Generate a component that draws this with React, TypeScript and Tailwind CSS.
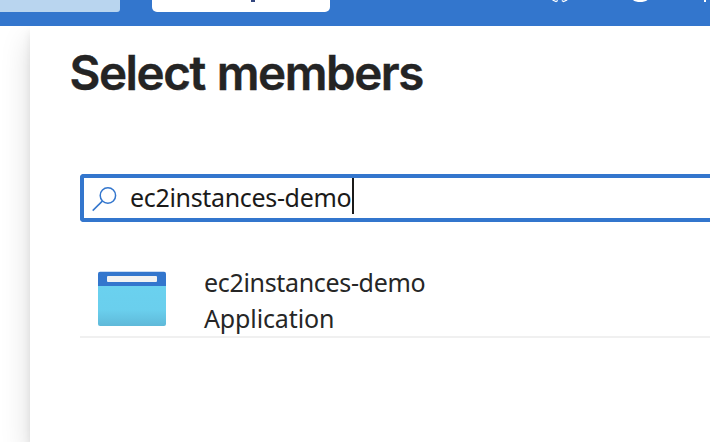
function AppIcon() {
  return (
    <svg className="block h-[56px] w-[68px] shrink-0" viewBox="0 0 68 56" aria-hidden="true">
      <defs>
        <linearGradient id="appBody" x1="0" y1="0" x2="0" y2="1">
          <stop offset="0" stopColor="#6ad1ef" />
          <stop offset="0.6" stopColor="#6acfed" />
          <stop offset="1" stopColor="#5fb9d9" />
        </linearGradient>
      </defs>
      <path d="M0 15H68V53Q68 55 66 55H2Q0 55 0 53Z" fill="url(#appBody)" />
      <path d="M2 .7H66Q68 .7 68 2.700V15H0V2.700Q0 .7 2 .7Z" fill="#3376cd" />
      <rect x="9" y="5" width="50" height="6" rx="1" fill="#f2f2f2" />
    </svg>
  );
}

function TopBar() {
  return (
    <header className="flex h-[26px] shrink-0 items-start bg-[#3376cd]">
      <div className="h-3 w-[120px] rounded-br-[3px] bg-[#b9d5ef]" />
      <div className="ml-8 h-3 w-[178px] rounded-b-[5px] bg-white">
        <div className="ml-[99px] h-[2px] w-[4px] bg-[#34477f]" />
      </div>
      <svg className="ml-auto h-3 w-[170px]" viewBox="0 0 170 12" fill="none" aria-hidden="true">
        <path d="M12.5 0L16 1.500L17.800 .5M27.200 0L23.500 1.500L21.800 .5" stroke="#fff" strokeWidth="1.2" />
        <path d="M93 0C96 2.800 104 2.800 107.500 0Z" fill="#fff" />
        <path d="M164 0H166V2H164Z" fill="#fff" />
      </svg>
    </header>
  );
}

export default function App() {
  return (
    <div className="flex h-[442px] w-[710px] flex-col overflow-hidden bg-white font-['Noto_Sans',sans-serif] text-[#262626]">
      <TopBar />
      <div className="flex flex-1 overflow-hidden">
        <div className="w-[30px] shrink-0 bg-white" />
        <main className="flex-1 bg-white pl-[40px] shadow-[0_14px_28px_rgba(0,0,0,0.15),0_6px_8px_rgba(0,0,0,0.07)]">
          <h1 className="-ml-[0.5px] h-[148px] pt-[18px] font-['Inter',sans-serif] text-[47.5px] leading-[58px] font-semibold tracking-[-1.45px] [word-spacing:1.5px] whitespace-nowrap text-[#242424] [-webkit-text-stroke:0.4px_#242424]">
            Select members
          </h1>
          <section className="ml-[10px]">
            <div className="flex h-12 items-start rounded-l-[4px] border-4 border-r-0 border-[#3376cd] bg-white pl-2">
              <svg className="mt-[9px] h-[26px] w-[26px] shrink-0" viewBox="0 0 26 26" fill="none" stroke="#3376cd" strokeWidth="1.5" aria-hidden="true">
                <circle cx="15.900" cy="8.500" r="7.700" />
                <path d="M10.300 14.100L.7 23.600" />
              </svg>
              <span className="-mt-px ml-3 w-[222px] text-[25px] leading-[40px] tracking-[-0.33px] whitespace-nowrap text-[#1b1a19]">ec2instances-demo</span>
              <span className="h-9 w-[2px] bg-[#1b1a19]" />
            </div>
            <div className="flex h-[116px] border-b-2 border-[#f0f0f0] pt-[49px] pl-[18px]">
              <AppIcon />
              <div className="-mt-[7px] ml-[38px] text-[25px] leading-[36px] whitespace-nowrap">
                <div className="tracking-[-0.33px]">ec2instances-demo</div>
                <div className="tracking-[-0.13px]">Application</div>
              </div>
            </div>
          </section>
        </main>
      </div>
    </div>
  );
}
